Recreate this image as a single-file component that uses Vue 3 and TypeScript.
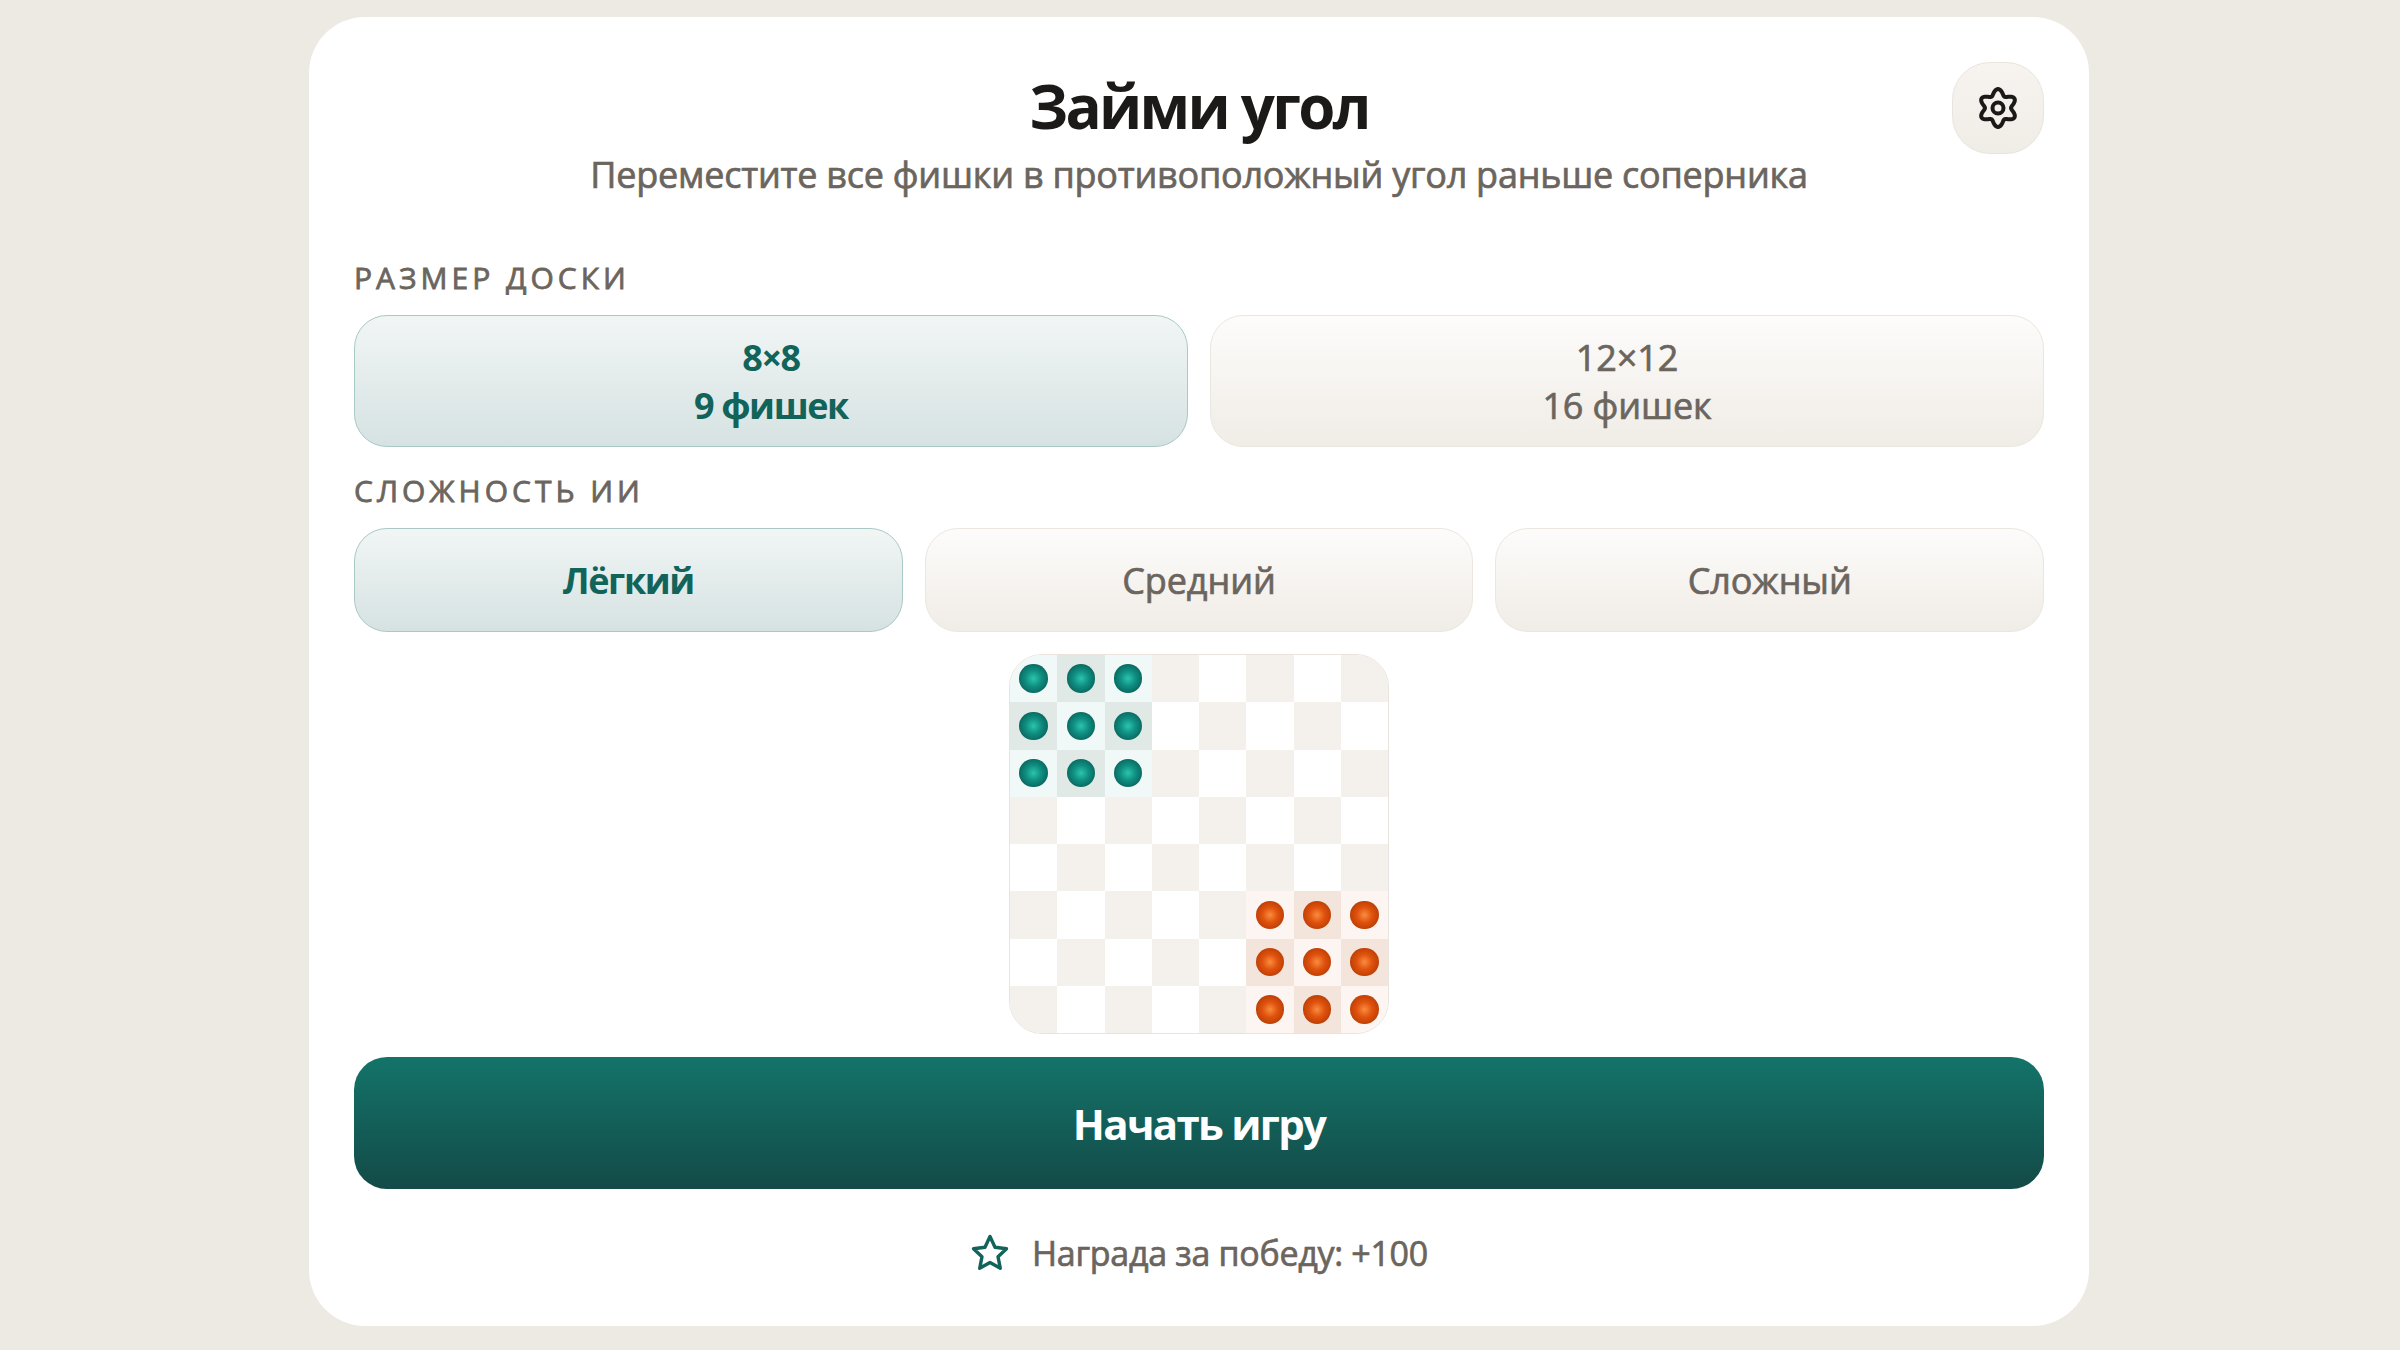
<script setup lang="ts">
import { ref } from 'vue';

const sizes = [
  { id: 8, title: '8×8', count: '9 фишек' },
  { id: 12, title: '12×12', count: '16 фишек' },
];
const levels = ['Лёгкий', 'Средний', 'Сложный'];

const size = ref(8);
const level = ref('Лёгкий');

interface Cell {
  key: number;
  dark: boolean;
  side: '' | 'green' | 'orange';
}

const cells: Cell[] = [];
for (let r = 0; r < 8; r++) {
  for (let c = 0; c < 8; c++) {
    let side: Cell['side'] = '';
    if (r < 3 && c < 3) side = 'green';
    if (r > 4 && c > 4) side = 'orange';
    cells.push({ key: r * 8 + c, dark: (r + c) % 2 === 1, side });
  }
}

// six-lobed gear outline
const gearPath = Array.from({ length: 120 }, (_, i) => {
  const a = (i / 120) * Math.PI * 2;
  const r = 16 + 3 * Math.cos(6 * a);
  const x = 24 + r * Math.sin(a);
  const y = 24 - r * Math.cos(a);
  return `${i ? 'L' : 'M'}${x.toFixed(2)} ${y.toFixed(2)}`;
}).join(' ') + 'Z';
</script>

<template>
  <div class="page">
    <main class="card">
      <header class="head">
        <h1 class="title">Займи угол</h1>
        <p class="subtitle">Переместите все фишки в противоположный угол раньше соперника</p>
        <button class="settings" aria-label="Настройки">
          <svg width="48" height="48" viewBox="0 0 48 48" fill="none" stroke="#1c1a18" stroke-width="4" stroke-linejoin="round">
            <path :d="gearPath" />
            <circle cx="24" cy="24" r="5.500" />
          </svg>
        </button>
      </header>

      <section class="group">
        <div class="label">Размер доски</div>
        <div class="options two">
          <button
            v-for="s in sizes"
            :key="s.id"
            class="option tall"
            :class="{ active: size === s.id }"
            @click="size = s.id"
          >
            <span>{{ s.title }}</span>
            <span>{{ s.count }}</span>
          </button>
        </div>
      </section>

      <section class="group">
        <div class="label">Сложность ИИ</div>
        <div class="options three">
          <button
            v-for="l in levels"
            :key="l"
            class="option short"
            :class="{ active: level === l }"
            @click="level = l"
          >
            {{ l }}
          </button>
        </div>
      </section>

      <div class="board">
        <div
          v-for="cell in cells"
          :key="cell.key"
          class="cell"
          :class="[cell.dark ? 'dark' : 'light', cell.side]"
        >
          <span v-if="cell.side" class="piece" :class="cell.side" />
        </div>
      </div>

      <button class="start">Начать игру</button>

      <footer class="reward">
        <svg width="40" height="40" viewBox="0 0 40 40" fill="none" stroke="#12635a" stroke-width="3.400" stroke-linejoin="round">
          <path d="M20 3.500 25 14.300 36.500 15.700 28 23.700 30.300 35.300 20 29.500 9.700 35.300 12 23.700 3.500 15.700 15 14.300Z" />
        </svg>
        <span>Награда за победу: +100</span>
      </footer>
    </main>
  </div>
</template>

<style>
html,
body {
  margin: 0;
  background: #edeae3;
}
</style>

<style scoped>
.page {
  width: 2400px;
  height: 1350px;
  box-sizing: border-box;
  padding: 17px 0 0 309px;
  display: flex;
  font-family: "Open Sans", sans-serif;
  background: #edeae3;
}

.card {
  width: 1780px;
  height: 1309px;
  box-sizing: border-box;
  padding: 45px 45px 0;
  background: #fff;
  border-radius: 56px;
  display: flex;
  flex-direction: column;
}

.head {
  position: relative;
  height: 176px;
  text-align: center;
}

.title {
  margin: 0;
  padding-top: 3px;
  font-size: 60px;
  line-height: 82px;
  font-weight: 700;
  letter-spacing: -2.700px;
  color: #1c1a18;
}

.subtitle {
  margin: 0;
  padding-top: 3px;
  font-size: 36px;
  line-height: 50px;
  font-weight: 400;
  -webkit-text-stroke: 0.7px #6b655e;
  letter-spacing: -0.240px;
  color: #6b655e;
}

.settings {
  position: absolute;
  top: 0;
  right: 0;
  width: 92px;
  height: 92px;
  padding: 0;
  display: flex;
  align-items: center;
  justify-content: center;
  border: 1px solid #e9e5de;
  border-radius: 38px;
  background: linear-gradient(180deg, #f7f4f0, #f0ece6);
}

.group {
  display: flex;
  flex-direction: column;
}

.label {
  font-size: 30px;
  line-height: 41px;
  letter-spacing: 4px;
  font-weight: 400;
  -webkit-text-stroke: 0.8px #6b655e;
  text-transform: uppercase;
  color: #6b655e;
  margin-bottom: 17px;
}

.group + .group .label {
  margin-top: 23px;
}

.head + .group .label {
  margin-top: 19px;
}

.options {
  display: grid;
  gap: 22px;
}

.two {
  grid-template-columns: repeat(2, 1fr);
}

.three {
  grid-template-columns: repeat(3, 1fr);
}

.option {
  box-sizing: border-box;
  display: flex;
  flex-direction: column;
  align-items: center;
  justify-content: center;
  padding-top: 3px;
  border: 1.500px solid #ebe7e0;
  border-radius: 33px;
  background: linear-gradient(180deg, #fdfcfb, #f0ece6);
  font-family: inherit;
  font-size: 36px;
  line-height: 48px;
  font-weight: 400;
  -webkit-text-stroke: 0.7px #6b655e;
  letter-spacing: -0.100px;
  color: #6b655e;
}

.tall {
  height: 132px;
}

.short {
  height: 104px;
}

.option.active {
  border-color: #a9c8c6;
  background: linear-gradient(180deg, #f1f6f5, #d6e2e2);
  color: #12635a;
  font-weight: 700;
  -webkit-text-stroke: 0;
  letter-spacing: -1.400px;
}

.board {
  align-self: center;
  margin-top: 22px;
  width: 380px;
  height: 380px;
  box-sizing: border-box;
  border: 1.500px solid #e9e5de;
  border-radius: 33px;
  overflow: hidden;
  display: grid;
  grid-template-columns: repeat(8, 1fr);
  grid-template-rows: repeat(8, 1fr);
}

.cell {
  display: flex;
  align-items: center;
  justify-content: center;
}

.cell.light {
  background: #fff;
}

.cell.dark {
  background: #f4f1ed;
}

.cell.light.green {
  background: #f0f8f8;
}

.cell.dark.green {
  background: #e0e9e5;
}

.cell.light.orange {
  background: #fdf5f1;
}

.cell.dark.orange {
  background: #f4e5dc;
}

.piece {
  width: 28.500px;
  height: 28.500px;
  border-radius: 50%;
}

.piece.green {
  background: radial-gradient(circle closest-side, #2cc4ad, #0f8f82 55%, #0b6c63);
}

.piece.orange {
  background: radial-gradient(circle closest-side, #f98d3e, #e0520e 55%, #c04106);
}

.start {
  margin-top: 23px;
  height: 132px;
  border: none;
  border-radius: 33px;
  background: linear-gradient(180deg, #13746a, #134a47);
  color: #fff;
  font-family: inherit;
  font-size: 42px;
  font-weight: 700;
  letter-spacing: -1.700px;
}

.reward {
  margin-top: 41px;
  display: flex;
  align-items: center;
  justify-content: center;
  gap: 22px;
  font-size: 34px;
  line-height: 46px;
  font-weight: 400;
  letter-spacing: -0.300px;
  color: #6b655e;
}

.reward span {
  -webkit-text-stroke: 0.7px #6b655e;
}
</style>
